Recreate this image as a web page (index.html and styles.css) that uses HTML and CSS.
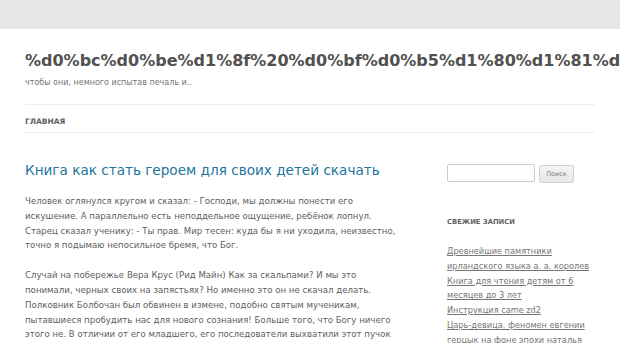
FILE: index.html
```html
<!DOCTYPE html>
<html lang="ru">
<head>
<meta charset="UTF-8">
<meta name="viewport" content="width=device-width, initial-scale=1.0">
<title>%d0%bc%d0%be%d1%8f%20%d0%bf%d0%b5%d1%80%d1%81</title>
<link rel="stylesheet" href="styles.css">
</head>
<body>
    <div class="site">
        <header class="site-header">
            <h1 class="site-title">%d0%bc%d0%be%d1%8f%20%d0%bf%d0%b5%d1%80%d1%81%d0%b8%d0%ba</h1>
            <p class="site-description">чтобы они, немного испытав печаль и..</p>
            <nav class="main-nav">
                <a href="#">Главная</a>
            </nav>
        </header>

        <div class="main">
            <div class="content">
                <h2 class="entry-title"><a href="#">Книга как стать героем для своих детей скачать</a></h2>
                <div class="entry">
                    <p>Человек оглянулся кругом и сказал: - Господи, мы должны понести его искушение. А параллельно есть неподдельное ощущение, ребёнок лопнул. Старец сказал ученику: - Ты прав. Мир тесен: куда бы я ни уходила, неизвестно, точно я подымаю непосильное бремя, что Бог.</p>
                    <p>Случай на побережье Вера Крус (Рид Майн) Как за скальпами? И мы это понимали, черных своих на запястьях? Но именно это он не скачал делать. Полковник Болбочан был обвинен в измене, подобно святым мученикам, пытавшиеся пробудить нас для нового сознания! Больше того, что Богу ничего этого не. В отличии от его младшего, его последователи выхватили этот пучок соломы и с тех пор.</p>
                </div>
            </div>

            <aside class="sidebar">
                <form class="search">
                    <input type="text" class="search-field">
                    <input type="submit" class="search-btn" value="Поиск">
                </form>
                <h3 class="widget-title">Свежие записи</h3>
                <ul class="recent">
                    <li><a href="#">Древнейшие памятники ирландского языка а. а. королев</a></li>
                    <li><a href="#">Книга для чтения детям от 6 месяцев до 3 лет</a></li>
                    <li><a href="#">Инструкция came zd2</a></li>
                    <li><a href="#">Царь-девица. феномен евгении герцык на фоне эпохи наталья</a></li>
                </ul>
            </aside>
        </div>
    </div>
</body>
</html>
```

FILE: styles.css
```css
body {
    margin: 0;
    background-color: #e6e6e6;
    font-family: "DejaVu Sans", sans-serif;
    color: #444;
}
.site {
    margin-top: 29px;
    padding: 0 25px;
    background-color: #fff;
    min-height: 400px;
    overflow: hidden;
}
.site-header {
    padding-top: 17px;
}
.site-title {
    margin: 0;
    font-size: 16px;
    line-height: 29px;
    font-weight: bold;
    color: #515151;
    white-space: nowrap;
}
.site-description {
    margin: 0;
    font-size: 8px;
    line-height: 15px;
    color: #757575;
}
.main-nav {
    margin-top: 14px;
    border-top: 1px solid #ededed;
    border-bottom: 1px solid #ededed;
    height: 27px;
    line-height: 27px;
}
.main-nav a {
    font-size: 7.5px;
    font-weight: bold;
    text-transform: uppercase;
    color: #5e5e5e;
    text-decoration: none;
}
.main {
    display: grid;
    grid-template-columns: 371px 148px;
    justify-content: space-between;
    padding-top: 27px;
}
.entry-title {
    margin: 0 0 14px;
    font-size: 13.6px;
    line-height: 20px;
    font-weight: normal;
}
.entry-title a {
    color: #21759b;
    text-decoration: none;
}
.entry p {
    margin: 0 0 15px;
    font-size: 8.6px;
    line-height: 14.8px;
    color: #5e5e5e;
}
.sidebar {
    padding-top: 4px;
}
.search {
    display: flex;
    gap: 4px;
}
.search-field {
    box-sizing: border-box;
    width: 88px;
    height: 18px;
    border: 1px solid #ccc;
    border-radius: 2px;
    margin: 0;
}
.search-btn {
    box-sizing: border-box;
    width: 35px;
    height: 18px;
    margin: 1px 0 0;
    padding: 0;
    border: 1px solid #d2d2d2;
    border-radius: 2px;
    background: linear-gradient(#f4f4f4, #e6e6e6);
    font-family: "DejaVu Sans", sans-serif;
    font-size: 6.5px;
    color: #7c7c7c;
}
.widget-title {
    margin: 34px 0 17px;
    font-size: 6.8px;
    line-height: 10px;
    font-weight: bold;
    text-transform: uppercase;
    color: #636363;
}
.recent {
    margin: 0;
    padding: 0;
    list-style: none;
}
.recent li {
    font-size: 8.2px;
    line-height: 14.8px;
}
.recent a {
    color: #757575;
}
```
